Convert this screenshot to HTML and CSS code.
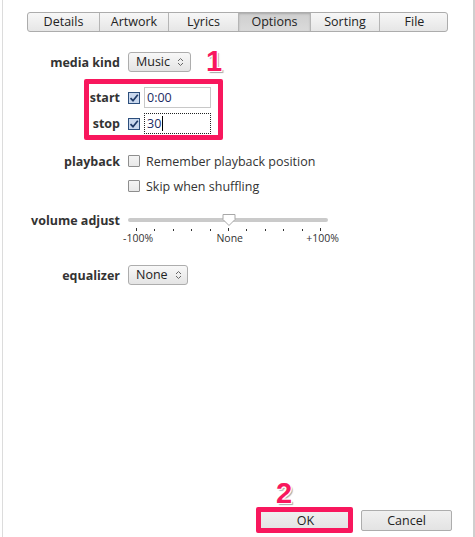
FILE: index.html
```html
<!DOCTYPE html>
<html>
<head>
<meta charset="utf-8">
<link rel="stylesheet" href="styles.css">
</head>
<body>
<div class="window">
  <div class="tabs">
    <div class="tab">Details</div>
    <div class="tab">Artwork</div>
    <div class="tab">Lyrics</div>
    <div class="tab selected">Options</div>
    <div class="tab">Sorting</div>
    <div class="tab">File</div>
  </div>

  <div class="row row-kind">
    <div class="label">media kind</div>
    <div class="select select-kind">Music <svg class="chev" width="7" height="10" viewBox="0 0 7 10"><path d="M1 4 L3.5 1.5 L6 4 M1 6 L3.5 8.5 L6 6" fill="none" stroke="#666" stroke-width="1"/></svg></div>
  </div>

  <div class="row row-start">
    <div class="label">start</div>
    <svg class="cb" width="12" height="12" viewBox="0 0 12 12"><rect x="0.5" y="0.5" width="11" height="11" fill="#c9d8ee" stroke="#2c4e7c"/><path d="M2.5 6.2 L5 8.7 L9.8 2.8" fill="none" stroke="#1e3966" stroke-width="1.7"/></svg>
    <div class="field">0:00</div>
  </div>
  <div class="row row-stop">
    <div class="label">stop</div>
    <svg class="cb" width="12" height="12" viewBox="0 0 12 12"><rect x="0.5" y="0.5" width="11" height="11" fill="#c9d8ee" stroke="#2c4e7c"/><path d="M2.5 6.2 L5 8.7 L9.8 2.8" fill="none" stroke="#1e3966" stroke-width="1.7"/></svg>
    <div class="field focus">30<span class="caret"></span></div>
  </div>

  <div class="row row-play">
    <div class="label">playback</div>
    <span class="box"></span>
    <span class="opt">Remember playback position</span>
  </div>
  <div class="row row-skip">
    <div class="label"></div>
    <span class="box"></span>
    <span class="opt">Skip when shuffling</span>
  </div>

  <div class="row row-vol">
    <div class="label">volume adjust</div>
    <div class="slider">
      <div class="track"><svg class="thumb" width="14" height="12" viewBox="0 0 14 12"><path d="M1 0.5 H13 V5.5 L7 11.5 L1 5.5 Z" fill="#fff" stroke="#a8a8a8"/></svg></div>
      <div class="ticks">
        <i class="big"></i><i></i><i></i><i></i><i></i><i class="big"></i><i></i><i></i><i></i><i></i><i class="big"></i>
      </div>
      <div class="scale"><span>-100%</span><span>None</span><span>+100%</span></div>
    </div>
  </div>

  <div class="row row-eq">
    <div class="label">equalizer</div>
    <div class="select select-eq">None <svg class="chev" width="7" height="10" viewBox="0 0 7 10"><path d="M1 4 L3.5 1.5 L6 4 M1 6 L3.5 8.5 L6 6" fill="none" stroke="#666" stroke-width="1"/></svg></div>
  </div>

  <div class="footer">
    <div class="btn">OK</div>
    <div class="btn">Cancel</div>
  </div>

  <div class="mark mark1"></div>
  <div class="num num1">1</div>
  <div class="mark mark2"></div>
  <div class="num num2">2</div>
</div>
</body>
</html>
```
FILE: styles.css
```css
html, body {
  margin: 0;
  padding: 0;
  background: #fff;
}
body {
  font-family: "Open Sans", "Noto Sans", sans-serif;
  font-size: 12.5px;
  color: #333;
}
.window {
  position: relative;
  box-sizing: border-box;
  width: 473px;
  height: 537px;
  margin-left: 2px;
  border-left: 1px solid #dcdcdc;
  border-right: 2px solid #cfcfcf;
  display: flex;
  flex-direction: column;
}
.tabs {
  margin: 12px 0 0 24px;
  display: grid;
  grid-template-columns: 71px 69px 70px 72px 69px 70px;
  width: 421px;
  height: 20px;
  box-sizing: border-box;
  border: 1px solid #acacac;
  border-radius: 3px;
  background: linear-gradient(#f7f7f7, #e6e6e6);
  overflow: hidden;
}
.tab {
  text-align: center;
  line-height: 18px;
  color: #222;
  border-left: 1px solid #b5b5b5;
}
.tab:first-child { border-left: none; }
.tab.selected {
  background: linear-gradient(#cfcfcf, #dadada);
  box-shadow: inset 0 1px 2px rgba(0,0,0,0.18);
}
.row {
  display: flex;
  align-items: center;
}
.label {
  width: 117px;
  margin-right: 8px;
  text-align: right;
  font-weight: bold;
  color: #333;
  flex: none;
}
.row-kind { margin-top: 20px; height: 20px; }
.row-start { margin-top: 15px; height: 21px; }
.row-stop { margin-top: 5px; height: 21px; }
.row-play { margin-top: 19px; height: 16px; }
.row-skip { margin-top: 9px; height: 16px; }
.row-vol { margin-top: 19px; align-items: flex-start; }
.row-vol .label { line-height: 16px; margin-top: 0; }
.row-eq { margin-top: 20px; height: 20px; }

.select {
  box-sizing: border-box;
  height: 20px;
  border: 1px solid #adadad;
  border-radius: 3px;
  background: linear-gradient(#f8f8f8, #e4e4e4);
  padding: 0 0 0 7px;
  line-height: 18px;
  color: #222;
  display: flex;
  align-items: center;
  gap: 7px;
}
.select-kind { width: 63px; }
.select-eq { width: 60px; }
.chev { flex: none; }

.cb { flex: none; margin-left: 0; }
.field {
  box-sizing: border-box;
  width: 67px;
  height: 21px;
  margin-left: 4px;
  border: 1px solid #c8c8c8;
  padding-left: 2px;
  line-height: 19px;
  color: #1b2b63;
  display: flex;
  align-items: center;
}
.field.focus {
  border: 1px dotted #222;
}
.caret {
  display: inline-block;
  width: 1px;
  height: 15px;
  background: #000;
  margin-left: 1px;
}
.box {
  box-sizing: border-box;
  width: 12px;
  height: 12px;
  border: 1px solid #8e8e8e;
  border-radius: 1px;
  background: linear-gradient(#f4f4f4, #e8e8e8);
  flex: none;
}
.opt {
  margin-left: 6px;
  color: #333;
}

.slider {
  width: 200px;
  position: relative;
}
.track {
  position: relative;
  margin-top: 5px;
  height: 4px;
  border-radius: 2px;
  background: #cacaca;
}
.thumb {
  position: absolute;
  left: 94px;
  top: -4px;
}
.ticks {
  display: flex;
  justify-content: space-between;
  width: 185px;
  margin: 5px 0 0 8px;
  height: 4px;
  align-items: flex-end;
}
.ticks i {
  display: block;
  width: 1px;
  height: 2px;
  background: #333;
}
.ticks i.big { height: 3px; }
.scale {
  display: flex;
  justify-content: space-between;
  width: 216px;
  margin-left: -5px;
  font-size: 10.5px;
  line-height: 14px;
  margin-top: 0;
  color: #333;
}

.footer {
  margin-top: auto;
  margin-bottom: 6px;
  display: flex;
  justify-content: flex-end;
  gap: 10px;
  padding-right: 21px;
}
.btn {
  box-sizing: border-box;
  width: 91px;
  height: 21px;
  border: 1px solid #adadad;
  border-radius: 2px;
  background: linear-gradient(#f0f0f0, #e3e3e3);
  text-align: center;
  line-height: 19px;
  color: #222;
}

.mark {
  position: absolute;
  border: 5px solid #f8175d;
  border-radius: 2px;
  box-sizing: border-box;
}
.mark1 { left: 81px; top: 79px; width: 139px; height: 61px; }
.mark2 { left: 253px; top: 507px; width: 97px; height: 26px; }
.num {
  position: absolute;
  font-family: "Liberation Sans", Arial, sans-serif;
  font-weight: bold;
  font-size: 29px;
  line-height: 29px;
  color: #f8175d;
  text-shadow: -1px -1px 0 #fff, 1px -1px 0 #fff, -1px 1px 0 #fff, 1px 1px 0 #fff, 2px 2px 1px rgba(0,0,0,0.35);
}
.num1 { left: 203px; top: 47px; }
.num2 { left: 273px; top: 479px; }
```
